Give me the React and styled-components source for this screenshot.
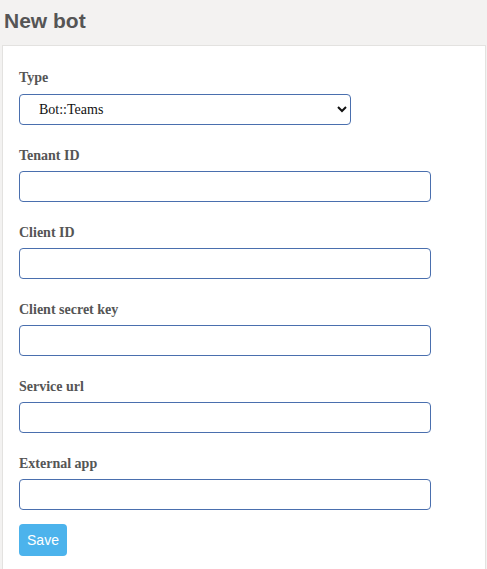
import React from "react"
import styled, { createGlobalStyle } from "styled-components"

const GlobalStyle = createGlobalStyle`
  html, body {
    margin: 0;
    padding: 0;
    background: #f3f2f1;
  }
`

const Page = styled.div`
  min-height: 569px;
  background: #f3f2f1;
  padding: 0 1px 0 2px;
`

const Header = styled.h1`
  margin: 0;
  height: 45px;
  box-sizing: border-box;
  padding: 8px 0 0 2px;
  font-family: "Liberation Sans", Arial, sans-serif;
  font-size: 21px;
  line-height: 25px;
  font-weight: bold;
  color: #555;
`

const Card = styled.form`
  background: #fff;
  border: 1px solid #e3e2e0;
  border-bottom: none;
  padding: 22px 16px 14px 16px;
  min-height: 500px;
`

const Field = styled.div`
  display: flex;
  flex-direction: column;
  align-items: flex-start;
  margin-bottom: 21px;
`

const Label = styled.label`
  font-family: "Liberation Serif", "Times New Roman", serif;
  font-weight: bold;
  font-size: 14px;
  line-height: 20px;
  color: #555;
  margin-bottom: ${p => (p.$gap ? p.$gap : "5px")};
`

const TextInput = styled.input`
  box-sizing: border-box;
  width: 412px;
  height: 31px;
  border: 1px solid #4a6fae;
  border-radius: 4px;
  background: #fff;
  padding: 0 8px;
  font-family: "Liberation Serif", serif;
  font-size: 14px;
  outline: none;
`

const Select = styled.select`
  box-sizing: border-box;
  width: 332px;
  height: 31px;
  border: 1px solid #4a6fae;
  border-radius: 4px;
  background: #fff;
  padding: 0 8px 0 15px;
  font-family: "Liberation Serif", "Times New Roman", serif;
  font-size: 14px;
  color: #111;
  outline: none;
`

const SaveButton = styled.button`
  width: 48px;
  height: 32px;
  border: none;
  border-radius: 4px;
  background: #4cb3ec;
  color: #fff;
  font-family: "Liberation Sans", Arial, sans-serif;
  font-size: 14px;
  padding: 0;
  margin-top: -7px;
  cursor: pointer;
`

const fields = ["Tenant ID", "Client ID", "Client secret key", "Service url", "External app"]

export default function App() {
  return (
    <Page>
      <GlobalStyle />
      <Header>New bot</Header>
      <Card onSubmit={e => e.preventDefault()}>
        <Field>
          <Label $gap="6px">Type</Label>
          <Select defaultValue="teams">
            <option value="teams">Bot::Teams</option>
          </Select>
        </Field>
        {fields.map(name => (
          <Field key={name}>
            <Label>{name}</Label>
            <TextInput type="text" />
          </Field>
        ))}
        <SaveButton type="submit">Save</SaveButton>
      </Card>
    </Page>
  )
}
